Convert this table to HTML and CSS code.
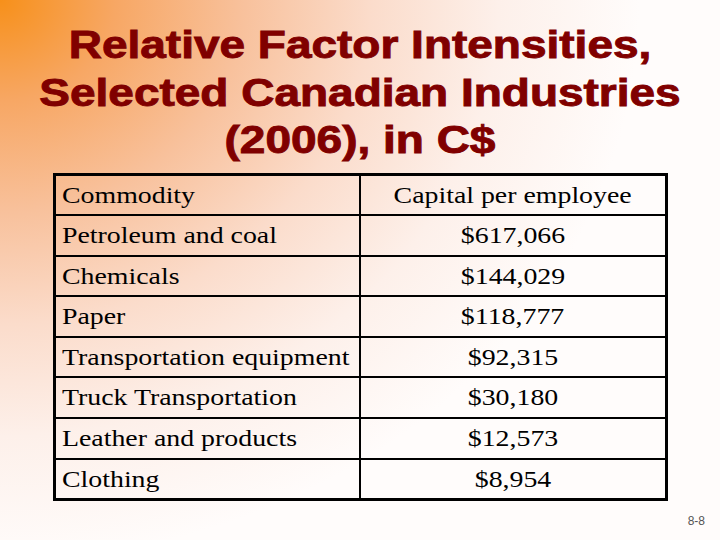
FILE: index.html
```html
<!DOCTYPE html>
<html>
<head>
<meta charset="utf-8">
<link rel="stylesheet" href="styles.css">
</head>
<body>
<div class="slide">
  <h1 class="title">Relative Factor Intensities,<br>Selected Canadian Industries<br>(2006), in C$</h1>
  <div class="table">
    <div class="cell c1"><span class="t l">Commodity</span></div>
    <div class="cell c2"><span class="t">Capital per employee</span></div>
    <div class="cell c1"><span class="t l">Petroleum and coal</span></div>
    <div class="cell c2"><span class="t">$617,066</span></div>
    <div class="cell c1"><span class="t l">Chemicals</span></div>
    <div class="cell c2"><span class="t">$144,029</span></div>
    <div class="cell c1"><span class="t l">Paper</span></div>
    <div class="cell c2"><span class="t">$118,777</span></div>
    <div class="cell c1"><span class="t l">Transportation equipment</span></div>
    <div class="cell c2"><span class="t">$92,315</span></div>
    <div class="cell c1"><span class="t l">Truck Transportation</span></div>
    <div class="cell c2"><span class="t">$30,180</span></div>
    <div class="cell c1"><span class="t l">Leather and products</span></div>
    <div class="cell c2"><span class="t">$12,573</span></div>
    <div class="cell c1 last"><span class="t l">Clothing</span></div>
    <div class="cell c2 last"><span class="t">$8,954</span></div>
  </div>
  <div class="footer">8-8</div>
</div>
</body>
</html>
```
FILE: styles.css
```css
html, body {
  margin: 0;
  padding: 0;
}
body {
  width: 720px;
  height: 540px;
  overflow: hidden;
}
.slide {
  width: 720px;
  height: 540px;
  display: flex;
  flex-direction: column;
  overflow: hidden;
  background:
    radial-gradient(ellipse 640px 560px at 0 0, #f7901a 0%, #f7a764 18%, #f8c19c 38%, #fbdccb 58%, #fdf0ea 78%, #fffcfb 100%);
  background-color: #fffcfb;
}
.title {
  width: 580px;
  margin: 22px auto 0 auto;
  font-family: "Liberation Sans", Arial, sans-serif;
  font-weight: bold;
  font-size: 38px;
  line-height: 47.5px;
  color: #800000;
  text-align: center;
  white-space: nowrap;
  -webkit-text-stroke: 0.9px #800000;
  transform: scaleX(1.21);
  transform-origin: center top;
}
.table {
  margin: 8px auto 0 auto;
  width: 615px;
  box-sizing: border-box;
  border: 3px solid #000;
  display: grid;
  grid-template-columns: 305px 1fr;
}
.cell {
  height: 40.6px;
  box-sizing: border-box;
  border-bottom: 2px solid #000;
  font-family: "Liberation Serif", "Times New Roman", serif;
  font-size: 24px;
  line-height: 38.6px;
  color: #000;
  white-space: nowrap;
}
.cell.last {
  border-bottom: none;
  height: 38.6px;
}
.c1 {
  border-right: 2px solid #000;
  padding-left: 6px;
}
.c2 {
  text-align: center;
}
.t {
  display: inline-block;
  transform: scaleX(1.16);
  transform-origin: center;
}
.t.l {
  transform-origin: left;
}
.footer {
  margin-top: auto;
  margin-bottom: 12px;
  padding-right: 15px;
  text-align: right;
  font-family: "Liberation Sans", Arial, sans-serif;
  font-size: 12px;
  color: #555;
}
```
